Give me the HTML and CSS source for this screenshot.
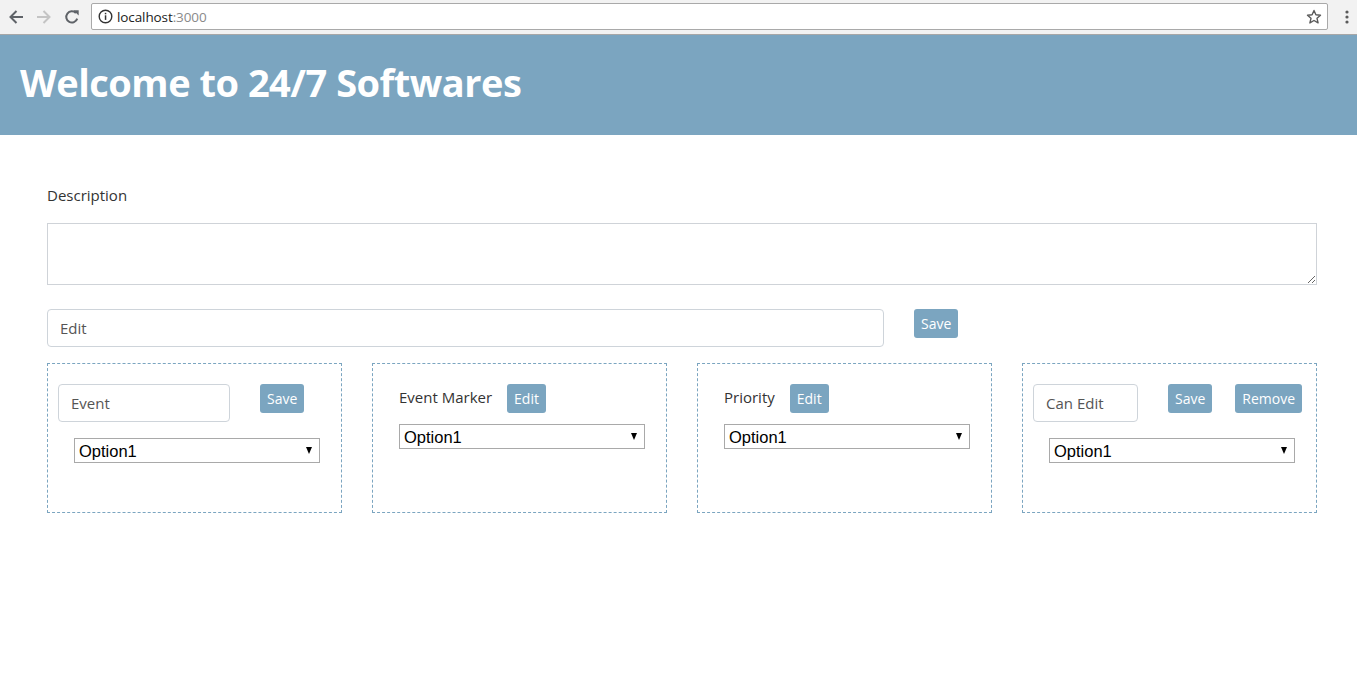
FILE: index.html
```html
<!DOCTYPE html>
<html>
<head>
<meta charset="utf-8">
<link rel="stylesheet" href="styles.css">
</head>
<body>
<div class="chrome">
  <div class="nav">
    <span class="navbtn">
      <svg width="16" height="16" viewBox="0 0 16 16"><path d="M15 8H2.5M8.5 2L2.5 8l6 6" fill="none" stroke="#5f6368" stroke-width="2"/></svg>
    </span>
    <span class="navbtn">
      <svg width="16" height="16" viewBox="0 0 16 16"><path d="M1 8h12.5M7.5 2l6 6-6 6" fill="none" stroke="#c4c4c4" stroke-width="2"/></svg>
    </span>
    <span class="navbtn">
      <svg width="16" height="16" viewBox="0 0 16 16"><path d="M13.2 9.6A5.6 5.6 0 1 1 11.9 4" fill="none" stroke="#5f6368" stroke-width="2"/><path d="M9.3 1.2h5.4v5.4z" fill="#5f6368"/></svg>
    </span>
  </div>
  <div class="omnibox">
    <svg class="info" width="15" height="15" viewBox="0 0 15 15"><circle cx="7.5" cy="7.5" r="6.3" fill="none" stroke="#333" stroke-width="1.4"/><rect x="6.8" y="6.3" width="1.5" height="4.6" fill="#333"/><rect x="6.8" y="3.8" width="1.5" height="1.5" fill="#333"/></svg>
    <span class="url">localhost<span class="port">:3000</span></span>
    <svg class="star" width="16" height="16" viewBox="0 0 16 16"><path d="M8 1.5l1.9 4.3 4.6.4-3.5 3.1 1.1 4.6L8 11.5l-4.1 2.4L5 9.3 1.5 6.2l4.6-.4z" fill="none" stroke="#5a5a5a" stroke-width="1.4" stroke-linejoin="round"/></svg>
  </div>
  <span class="menu">
    <svg width="4" height="16" viewBox="0 0 4 16"><circle cx="2" cy="3" r="1.6" fill="#5a5a5a"/><circle cx="2" cy="8" r="1.6" fill="#5a5a5a"/><circle cx="2" cy="13" r="1.6" fill="#5a5a5a"/></svg>
  </span>
</div>

<header class="banner">
  <h1 class="title">Welcome to 24/7 Softwares</h1>
</header>

<main class="content">
  <label class="desc-label">Description</label>
  <textarea class="desc"></textarea>

  <div class="edit-row">
    <input class="form-control wide" placeholder="Edit">
    <button class="btn">Save</button>
  </div>

  <div class="cards">
    <div class="card">
      <div class="row">
        <input class="form-control event" placeholder="Event">
        <button class="btn">Save</button>
      </div>
      <div class="sel-wrap indent"><select class="sel"><option>Option1</option></select></div>
    </div>

    <div class="card">
      <div class="row lrow">
        <span class="lbl">Event Marker</span>
        <button class="btn">Edit</button>
      </div>
      <div class="sel-wrap indent tight"><select class="sel"><option>Option1</option></select></div>
    </div>

    <div class="card">
      <div class="row lrow">
        <span class="lbl">Priority</span>
        <button class="btn">Edit</button>
      </div>
      <div class="sel-wrap indent tight"><select class="sel"><option>Option1</option></select></div>
    </div>

    <div class="card">
      <div class="row">
        <input class="form-control canedit" placeholder="Can Edit">
        <button class="btn">Save</button>
        <button class="btn remove">Remove</button>
      </div>
      <div class="sel-wrap indent"><select class="sel"><option>Option1</option></select></div>
    </div>
  </div>
</main>
</body>
</html>
```

FILE: styles.css
```css
* { box-sizing: border-box; }

html, body {
  margin: 0;
  padding: 0;
  background: #fff;
}

body {
  font-family: "Open Sans", "Noto Sans", sans-serif;
  color: #333;
  width: 1357px;
  height: 680px;
  overflow: hidden;
}

/* browser chrome */
.chrome {
  height: 35px;
  background: #f2f2f2;
  border-bottom: 1px solid #a7a7a7;
  display: flex;
  align-items: center;
  padding-left: 2px;
}

.nav {
  display: flex;
}

.navbtn {
  width: 28px;
  height: 28px;
  display: flex;
  align-items: center;
  justify-content: center;
}

.omnibox {
  margin-left: 5px;
  width: 1237px;
  height: 27px;
  margin-top: -1px;
  background: #fff;
  border: 1px solid #a9a9a9;
  border-radius: 2px;
  display: flex;
  align-items: center;
  padding-left: 6px;
}

.info {
  flex: none;
}

.url {
  margin-left: 4px;
  font-family: "Open Sans", sans-serif;
  font-size: 13.5px;
  color: #222;
  letter-spacing: -0.1px;
}

.port {
  color: #8a8a8a;
}

.star {
  margin-left: auto;
  margin-right: 5px;
}

.menu {
  margin-left: 17px;
  display: flex;
  align-items: center;
}

/* header */
.banner {
  height: 100px;
  background: #7ba5c0;
  padding: 0 20px;
  display: flex;
  align-items: center;
}

.title {
  margin: 0;
  color: #fff;
  font-family: "Open Sans", sans-serif;
  font-weight: 700;
  font-size: 38px;
  letter-spacing: -0.5px;
  line-height: 1;
  padding-bottom: 6px;
}

/* content */
.content {
  padding: 50px 40px 0 47px;
}

.desc-label {
  display: block;
  font-size: 15px;
  line-height: 20px;
  color: #333;
}

.desc {
  display: block;
  margin-top: 18px;
  width: 1270px;
  height: 62px;
  border: 1px solid #cfd3d8;
  border-radius: 0;
  padding: 4px;
  font: inherit;
}

.edit-row {
  margin-top: 24px;
  display: flex;
  align-items: flex-start;
  gap: 30px;
}

.form-control {
  height: 38px;
  border: 1px solid #ced4da;
  border-radius: 4px;
  padding: 6px 12px;
  font-family: "Open Sans", sans-serif;
  font-size: 15px;
  color: #495057;
  background: #fff;
  outline: none;
}

.form-control::placeholder {
  color: #555;
  opacity: 1;
}

.wide {
  width: 837px;
}

.btn {
  height: 29px;
  padding: 0 7px;
  border: none;
  border-radius: 3px;
  background: #7ba5c0;
  color: #fff;
  font-family: "Open Sans", sans-serif;
  font-size: 14px;
  line-height: 29px;
}

.cards {
  margin-top: 16px;
  display: flex;
  gap: 30px;
}

.card {
  width: 295px;
  height: 150px;
  border: 1px dashed #7ba5c0;
  padding: 20px 10px 0 10px;
}

.row {
  display: flex;
  align-items: flex-start;
  gap: 30px;
}

.row .remove {
  margin-left: -7px;
}

.event {
  width: 172px;
}

.canedit {
  width: 105px;
}

.lrow {
  padding-left: 16px;
  gap: 15px;
  align-items: center;
  height: 29px;
}

.lbl {
  font-size: 15px;
  color: #333;
  margin-top: -4px;
}

.sel-wrap {
  position: relative;
  width: 246px;
  height: 25px;
  margin-top: 16px;
}

.sel-wrap.tight {
  margin-top: 11px;
}

.indent {
  margin-left: 16px;
}

.sel {
  -webkit-appearance: none;
  appearance: none;
  width: 246px;
  height: 25px;
  border: 1px solid #a9a9a9;
  border-radius: 0;
  background: #fff;
  padding: 0 4px;
  font-family: "Liberation Sans", Arial, sans-serif;
  font-size: 16.5px;
  color: #000;
  outline: none;
}

.sel-wrap::after {
  content: "";
  position: absolute;
  right: 8px;
  top: 9px;
  width: 0;
  height: 0;
  border-left: 3.5px solid transparent;
  border-right: 3.5px solid transparent;
  border-top: 7px solid #000;
  pointer-events: none;
}
```
